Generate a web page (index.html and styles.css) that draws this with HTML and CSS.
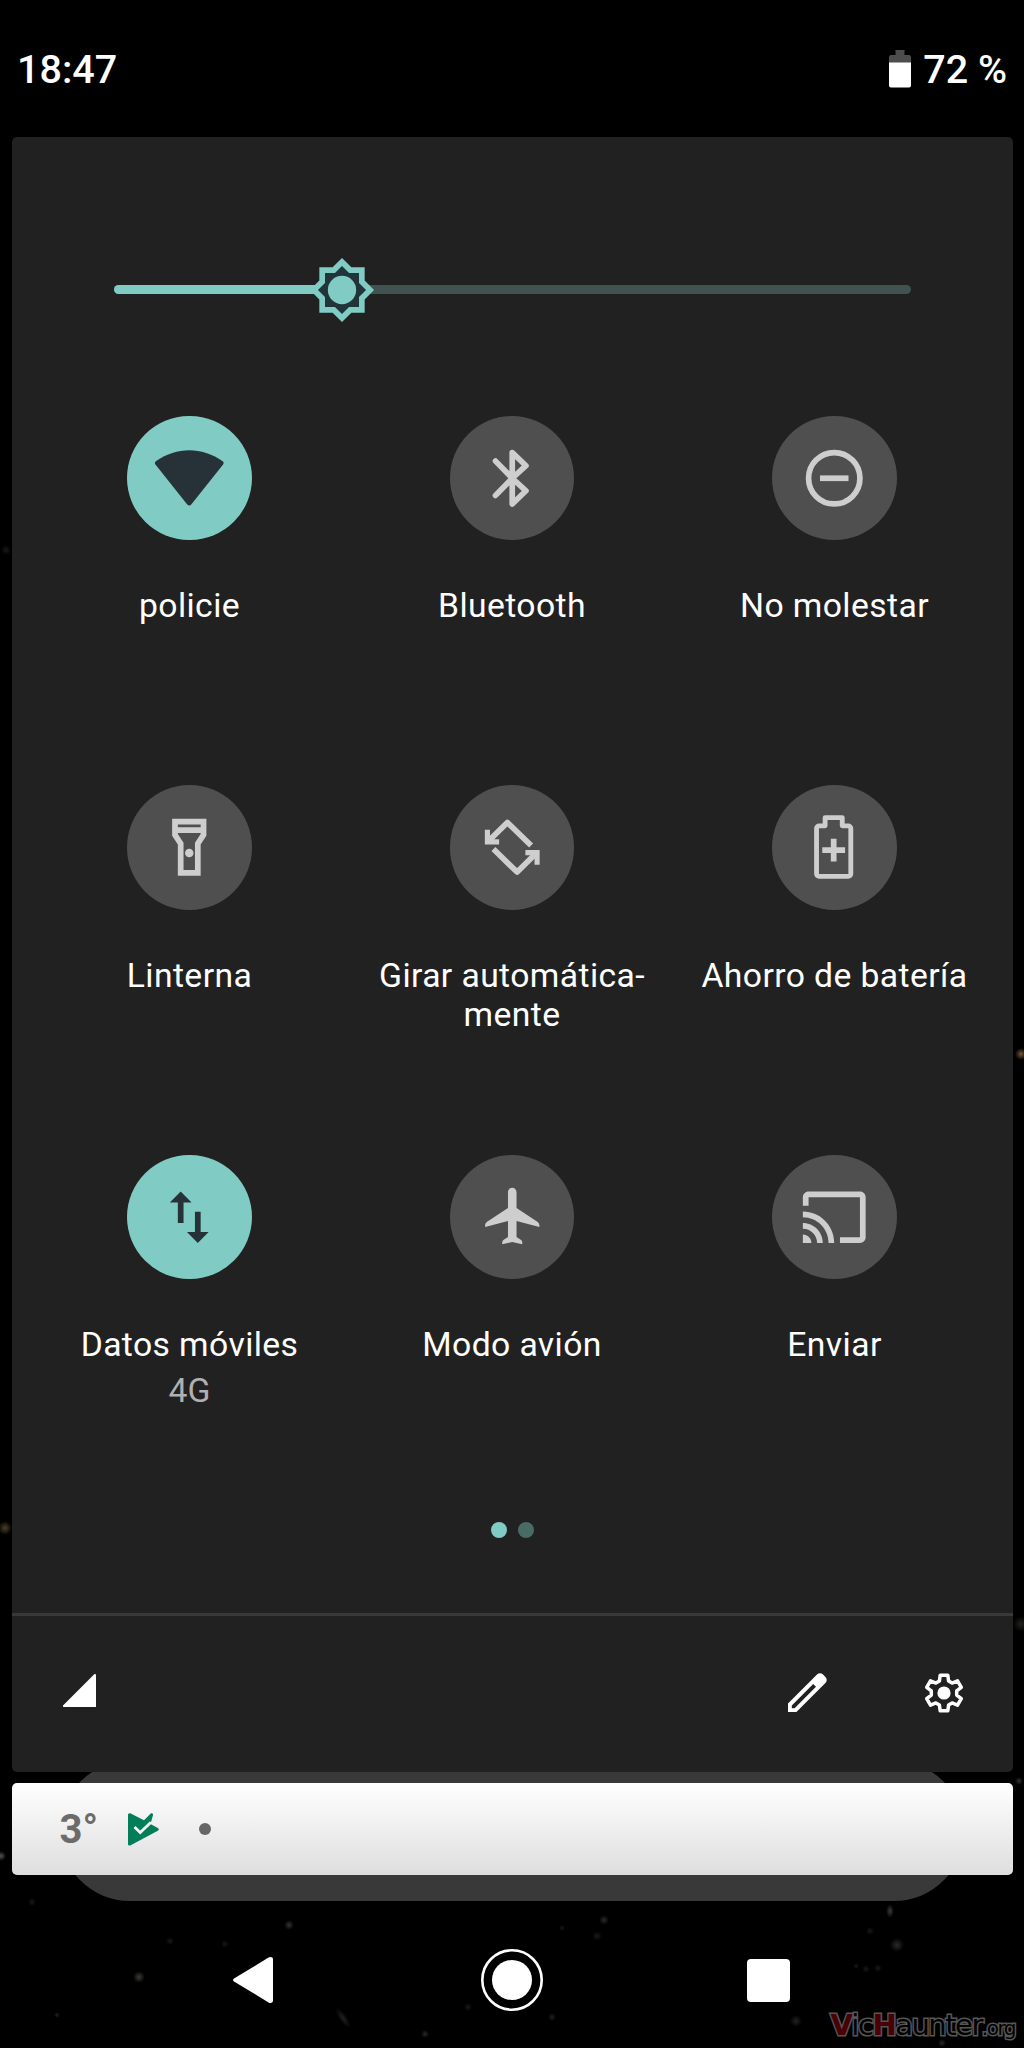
FILE: index.html
```html
<!DOCTYPE html>
<html lang="es">
<head>
<meta charset="utf-8">
<title>Ajustes rápidos</title>
<link rel="stylesheet" href="styles.css">
</head>
<body>
<div class="screen">
  <svg class="wallpaper" viewBox="0 0 1024 2048" aria-hidden="true">
    <defs>
      <radialGradient id="glow"><stop offset="0" stop-color="#8c8c80" stop-opacity=".6"/><stop offset="1" stop-color="#8c8c80" stop-opacity="0"/></radialGradient>
      <radialGradient id="amber"><stop offset="0" stop-color="#a08050" stop-opacity=".7"/><stop offset="1" stop-color="#a08050" stop-opacity="0"/></radialGradient>
    </defs>
    <g fill="url(#glow)">
      <circle cx="139" cy="1977" r="6" opacity=".7"/><circle cx="289" cy="1925" r="5" opacity=".6"/><circle cx="225" cy="1944" r="4" opacity=".3"/>
      <circle cx="170" cy="1941" r="4" opacity=".3"/><circle cx="32" cy="1902" r="4" opacity=".3"/><circle cx="57" cy="2015" r="3" opacity=".4"/>
      <ellipse cx="343" cy="2018" rx="12" ry="4" transform="rotate(55 343 2018)" opacity=".4"/>
      <circle cx="425" cy="2034" r="4" opacity=".5"/><circle cx="468" cy="2007" r="4" opacity=".3"/>
      <circle cx="604" cy="1920" r="5" opacity=".5"/><circle cx="597" cy="1936" r="5" opacity=".3"/><circle cx="562" cy="1928" r="3" opacity=".3"/>
      <ellipse cx="890" cy="1911" rx="4" ry="7" opacity=".7"/><circle cx="897" cy="1945" r="7" opacity=".5"/><circle cx="870" cy="1931" r="4" opacity=".3"/>
      <circle cx="866" cy="1969" r="4" opacity=".3"/><circle cx="856" cy="1966" r="3" opacity=".3"/><circle cx="878" cy="1968" r="4" opacity=".3"/>
      <circle cx="796" cy="2021" r="6" opacity=".4"/><circle cx="552" cy="2017" r="4" opacity=".4"/><circle cx="942" cy="2043" r="4" opacity=".5"/>
      <circle cx="1" cy="1856" r="5"/><circle cx="1019" cy="1781" r="4" opacity=".6"/><circle cx="1021" cy="1054" r="6" fill="url(#amber)"/>
      <circle cx="5" cy="1528" r="7" opacity=".7" fill="url(#amber)"/><circle cx="1021" cy="1624" r="8" opacity=".4"/><circle cx="6" cy="550" r="5" opacity=".3"/>
    </g>
  </svg>

  <header class="status">
    <span class="clock">18:47</span>
    <span class="battery">
      <svg width="22" height="38" viewBox="0 0 22 38"><path fill="#4d4d4d" d="M6.500 0h9v5H20a2 2 0 0 1 2 2v6H0V7a2 2 0 0 1 2-2h4.500z"/><path fill="#fff" d="M0 12.500h22V35.500a2 2 0 0 1-2 2H2a2 2 0 0 1-2-2z"/></svg>
      <span>72 %</span>
    </span>
  </header>

  <main class="panel">
    <div class="slider">
      <div class="track"><div class="fill" style="width:28.700%"></div></div>
      <svg class="thumb" viewBox="0 0 24 24">
        <path fill="#80cbc4" d="M20 8.690V4h-4.690L12 .690 8.690 4H4v4.690L.690 12 4 15.310V20h4.690L12 23.310 15.310 20H20v-4.690L23.310 12z"/>
        <path fill="#20343a" d="M18 9.520V6h-3.520L12 3.520 9.520 6H6v3.520L3.520 12 6 14.480V18h3.520L12 20.480 14.480 18H18v-3.520L20.480 12z"/>
        <circle cx="12" cy="12" r="5" fill="#80cbc4"/>
      </svg>
    </div>

    <div class="tiles">
      <div class="tile on">
        <div class="disc"><svg viewBox="0 0 24 24"><path d="M12 2.200c4 0 7.900 1.250 11.600 3.750.5.350.6.800.25 1.250L12.700 21.200c-.4.500-1 .5-1.400 0L.15 7.200C-.2 6.750-.1 6.300.4 5.950 4.100 3.450 8 2.200 12 2.200z"/></svg></div>
        <div class="label">policie</div>
      </div>
      <div class="tile">
        <div class="disc"><svg viewBox="0 0 24 24"><path class="line round" d="M6.150 6L12 12l4.800 4.400L12 21V3l4.800 4.600L12 12l-5.850 6"/></svg></div>
        <div class="label">Bluetooth</div>
      </div>
      <div class="tile">
        <div class="disc"><svg viewBox="0 0 24 24"><circle class="line" cx="12" cy="12" r="9"/><path d="M7 11h10v2H7z"/></svg></div>
        <div class="label">No molestar</div>
      </div>
      <div class="tile">
        <div class="disc"><svg viewBox="0 0 24 24"><path fill-rule="evenodd" d="M6 2h12v6l-2 3v11H8V11L6 8zM8 4v1h8V4zM8 7v.4l2 3V20h4v-9.600l2-3V7z"/><circle cx="12" cy="14" r="1.500"/></svg></div>
        <div class="label">Linterna</div>
      </div>
      <div class="tile">
        <div class="disc"><svg viewBox="0 0 24 24"><path class="line" stroke-linejoin="round" d="M3.800 9.700L10.300 3.300 18.600 11.400M5.400 12.600l8.300 8.100 6.500-6.400"/><path d="M2.400 5.900v5.100h5V9.200H4.200V5.900zM21.600 18.100V13h-5v1.800h3.200v3.300z"/></svg></div>
        <div class="label">Girar automática-<br>mente</div>
      </div>
      <div class="tile">
        <div class="disc"><svg viewBox="0 0 24 24"><path class="line thin" stroke-linejoin="round" d="M6.700 4.500h2.100V1.600h6v2.900h2.100a.9.900 0 0 1 .9.900v15.900a.9.900 0 0 1-.9.900H6.700a.9.900 0 0 1-.9-.9V5.400a.9.900 0 0 1 .9-.9z"/><path d="M10.800 9h2v3h3v2h-3v3h-2v-3h-3v-2h3z"/></svg></div>
        <div class="label">Ahorro de batería</div>
      </div>
      <div class="tile on">
        <div class="disc"><svg viewBox="0 0 24 24"><path d="M9 3L5.200 6.800H8V14h2V6.800h2.800zM14 10.100v7.100h-2.800L15 21l3.800-3.800H16v-7.100z"/></svg></div>
        <div class="label">Datos móviles</div>
        <div class="sub">4G</div>
      </div>
      <div class="tile">
        <div class="disc"><svg viewBox="0 0 24 24"><path d="M21.500 15.400v-.6c0-.5-.3-.95-.7-1.200L13.500 8.800V3.200C13.500 2.400 12.800 1.700 12 1.700s-1.500.7-1.500 1.500v5.600L3.200 13.600c-.4.250-.7.700-.7 1.200v.6l8-2.100v5.600l-1.600 1.100c-.25.200-.4.500-.4.800v.7L12 20.700l3.500.8v-.7c0-.3-.15-.6-.4-.8l-1.600-1.100v-5.600z"/></svg></div>
        <div class="label">Modo avión</div>
      </div>
      <div class="tile">
        <div class="disc"><svg viewBox="0 0 24 24"><path d="M21 3H3c-1.100 0-2 .9-2 2v3h2V5h18v14h-7v2h7c1.100 0 2-.9 2-2V5c0-1.100-.9-2-2-2zM1 18v3h3c0-1.660-1.340-3-3-3zm0-4v2c2.760 0 5 2.240 5 5h2c0-3.870-3.130-7-7-7zm0-4v2c4.970 0 9 4.030 9 9h2c0-6.080-4.930-11-11-11z"/></svg></div>
        <div class="label">Enviar</div>
      </div>
    </div>

    <div class="pages"><i class="current"></i><i></i></div>

    <footer class="footer">
      <svg class="signal" viewBox="0 0 33 33"><path fill="#fff" d="M0 31.500L31 .4c.8-.6 2-.2 2 .8V33H1C0 33-.3 32 0 31.500z"/></svg>
      <svg class="pencil" viewBox="0 0 39 39"><path fill="#fff" fill-rule="evenodd" d="M0 30.600L29 1.600c1.800-1.800 4.200-1.800 6 0l2.400 2.400c1.800 1.800 1.800 4.200 0 6l-29 29H0zM25.200 11L3.800 32.400v2.800h2.800L28 13.800z"/></svg>
      <svg class="gear" viewBox="-20 -20 40 40"><path fill="none" stroke="#fff" stroke-width="3.500" stroke-linejoin="round" d="M-4.600-12L-3.800-17.800H3.800L4.600-12 8.090-9.980 13.510-12.190 17.310-5.610 12.690-2.020V2.020L17.310 5.610 13.510 12.190 8.090 9.980 4.600 12 3.800 17.800H-3.800L-4.600 12-8.090 9.980-13.510 12.190-17.310 5.610-12.690 2.020V-2.020L-17.310-5.610-13.510-12.190-8.090-9.980z"/><circle r="6.600" fill="#fff"/></svg>
    </footer>
  </main>

  <div class="dock">
    <div class="notification">
      <span class="temp">3°</span>
      <svg class="play" viewBox="0 0 31 33"><path fill="#017e57" d="M0 2C0 .4 1.300-.3 2.700.4L16 7.300 22.500.8c1.500-1.300 3.300.3 2.300 1.900L22.500 11l7.300 3.900c1.400.8 1.400 2 0 2.800L2.700 32.300C1.300 33 0 32.400 0 31z"/><path fill="none" stroke="#f3f3f3" stroke-width="2.800" d="M6.500 14l5.700 5.600L23 9.200"/></svg>
      <i class="dot"></i>
    </div>
  </div>

  <nav class="nav">
    <svg width="40" height="46" viewBox="0 0 40 46"><path fill="#fff" d="M1 21.500L35.500.6C37.500-.5 40 0 40 2.500v41c0 2.500-2.500 3-4.500 1.900L1 24.500c-1.300-.8-1.300-2.200 0-3z"/></svg>
    <svg class="home" width="62" height="62" viewBox="0 0 62 62"><circle cx="31" cy="31" r="29.700" fill="none" stroke="#fff" stroke-width="2.600"/><circle cx="31" cy="31" r="20" fill="#fff"/></svg>
    <svg width="43" height="43" viewBox="0 0 43 43"><rect width="43" height="43" rx="4" fill="#fff"/></svg>
  </nav>

  <div class="watermark"><b>V</b>ic<b>H</b>aunter<small>.org</small></div>
</div>
</body>
</html>
```
FILE: styles.css
```css
* { box-sizing: border-box; }
body { margin: 0; background: #000; font-family: Roboto, sans-serif; color: #fff; }
svg { display: block; }
.screen {
  position: relative;
  width: 1024px;
  height: 2048px;
  overflow: hidden;
  background: #000;
  display: flex;
  flex-direction: column;
}
.wallpaper { position: absolute; inset: 0; }

.status {
  height: 137px;
  padding: 2px 17px 0 17px;
  display: flex;
  justify-content: space-between;
  align-items: center;
  font-size: 39.500px;
  font-weight: 500;
}
.battery { display: flex; align-items: center; gap: 12px; }
.battery svg { margin-bottom: 2px; }

.panel {
  position: relative;
  z-index: 1;
  height: 1635px;
  margin: 0 11.500px;
  background: #212121;
  border-radius: 5px;
  display: flex;
  flex-direction: column;
}
.slider { position: relative; margin: 148px 102px 0; }
.track { height: 9px; border-radius: 4.500px; background: #405351; overflow: hidden; }
.fill { height: 100%; background: #80cbc4; }
.thumb { position: absolute; left: 28.700%; top: 50%; width: 68px; height: 68px; transform: translate(-50%, -50%); }

.tiles {
  margin: 121.500px 16.750px 0;
  display: grid;
  grid-template-columns: repeat(3, 322.500px);
  grid-auto-rows: 369.700px;
}
.tile { display: flex; flex-direction: column; align-items: center; text-align: center; }
.disc {
  width: 124.500px;
  height: 124.500px;
  border-radius: 50%;
  background: #4f4f4f;
  display: flex;
  align-items: center;
  justify-content: center;
}
.disc svg { width: 68.500px; height: 68.500px; overflow: visible; fill: #cecece; }
.disc .line { fill: none; stroke: #cecece; stroke-width: 2; }
.disc .thin { stroke-width: 1.700; }
.disc .round { stroke-linecap: round; stroke-linejoin: round; }
.on .disc { background: #80cbc4; }
.on .disc svg { fill: #263238; }
.label { margin-top: 46px; font-size: 33.700px; letter-spacing: .4px; line-height: 39.500px; white-space: nowrap; }
.sub { margin-top: 6.500px; font-size: 33.700px; line-height: 39.500px; color: #b0b0b0; }

.pages { display: flex; justify-content: center; gap: 11px; margin-top: -2.500px; }
.pages i { width: 16px; height: 16px; border-radius: 50%; background: #4a6a65; }
.pages .current { background: #80cbc4; }

.footer {
  height: 159px;
  margin-top: auto;
  border-top: 3px solid #393939;
  padding: 0 48.500px 3px 51.500px;
  display: flex;
  align-items: center;
}
.signal { width: 33px; height: 33px; margin-right: auto; margin-bottom: 4px; }
.pencil { width: 39px; height: 39px; margin-right: 97px; }
.gear { width: 40px; height: 40px; }

.dock {
  height: 140px;
  margin: -11px 60px 0;
  padding-top: 22px;
  border-radius: 70px;
  background: #393939;
  position: relative;
}
.notification {
  height: 92px;
  margin: 0 -48.500px;
  padding-left: 48px;
  border-radius: 5px;
  background: linear-gradient(#fff, #dedede);
  display: flex;
  align-items: center;
}
.temp { width: 68.500px; color: #6b6b6b; font-size: 40px; font-weight: 700; }
.play { width: 31px; height: 33px; }
.dot { width: 12px; height: 12px; margin-left: 40px; border-radius: 50%; background: #666; }

.nav {
  margin-top: 48px;
  padding: 0 234px 0 233px;
  display: grid;
  grid-template-columns: 1fr 62px 1fr;
  align-items: center;
}
.nav svg:last-child { justify-self: end; }
.watermark {
  position: absolute;
  right: 9px;
  bottom: 2px;
  font: 29px/36px "DejaVu Sans", sans-serif;
  letter-spacing: -1.500px;
  color: #000;
  -webkit-text-stroke: 3px #565656;
  paint-order: stroke fill;
}
.watermark b { font-weight: 700; color: #480004; }
.watermark small { font-size: 20px; }
```
